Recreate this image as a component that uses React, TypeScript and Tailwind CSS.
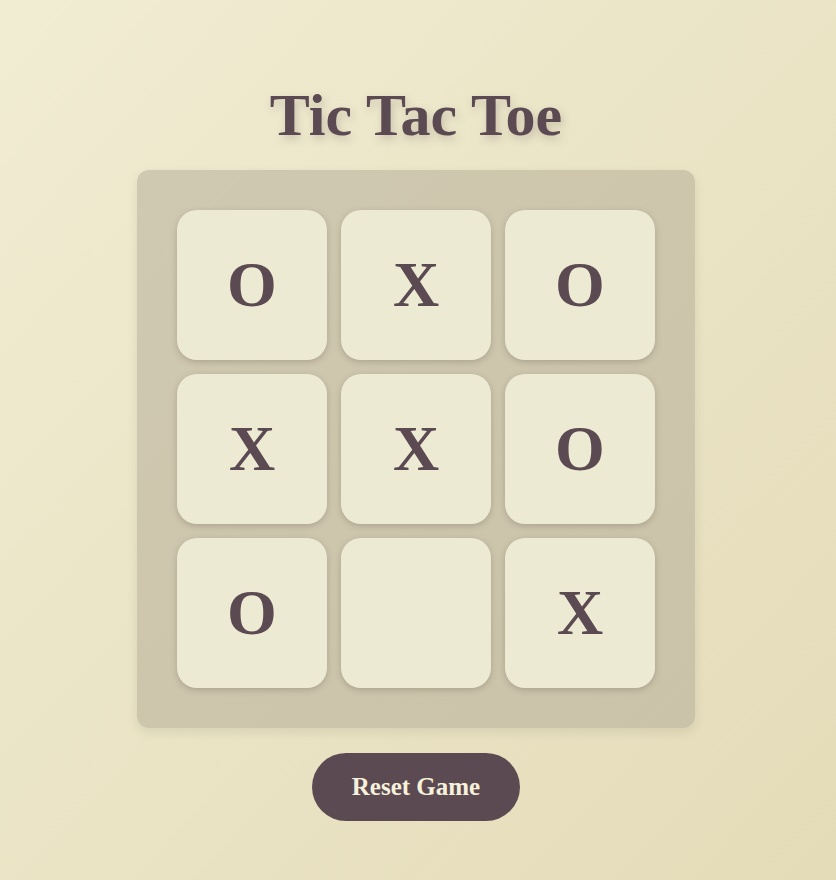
import { useState } from "react";

const initial = ["O", "X", "O", "X", "X", "O", "O", "", "X"];

export default function App() {
  const [cells, setCells] = useState<string[]>(initial);

  return (
    <div
      className="min-h-screen w-full flex flex-col items-center bg-gradient-to-br from-[#f1edd3] to-[#e4dbb8] text-[#5c4a52] pt-[78px] pr-1"
      style={{ fontFamily: '"Liberation Serif", "Times New Roman", serif' }}
    >
      {/* Title */}
      <h1 className="text-[60px] leading-[74px] font-bold [text-shadow:2px_4px_8px_rgba(92,74,82,0.25)]">
        Tic Tac Toe
      </h1>

      {/* Board */}
      <div className="mt-[18px] grid grid-cols-3 gap-[14px] p-[40px] rounded-xl bg-gradient-to-br from-[#d0c9b1] to-[#cac3a9] shadow-[0_4px_12px_rgba(0,0,0,0.08)]">
        {cells.map((c, i) => (
          <button
            key={i}
            onClick={() => {
              const next = [...cells];
              next[i] = c === "" ? "X" : c;
              setCells(next);
            }}
            className="w-[150px] h-[150px] rounded-[20px] bg-[#edead4] flex items-center justify-center text-[64px] font-bold leading-none shadow-[0_2px_6px_rgba(80,60,50,0.25)]"
          >
            {c}
          </button>
        ))}
      </div>

      {/* Reset */}
      <button
        onClick={() => setCells(Array(9).fill(""))}
        className="mt-[25px] w-[208px] h-[68px] rounded-full bg-[#5c4a52] text-[#f6f1da] text-[25px] font-bold"
      >
        Reset Game
      </button>
    </div>
  );
}
